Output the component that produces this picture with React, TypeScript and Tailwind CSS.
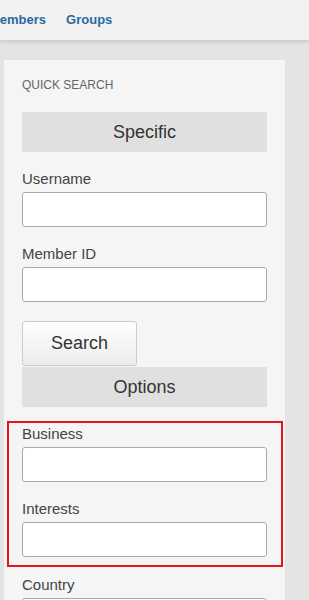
import React from "react";

const Field = ({ label }: { label: string }) => (
  <div className="mb-[17px]">
    <label className="block h-5 text-[15px] leading-5 text-[#444]">{label}</label>
    <input
      type="text"
      className="mt-[3px] block h-[35px] w-full rounded-[3px] border border-[#aaa] bg-white"
    />
  </div>
);

const SectionHead = ({ title }: { title: string }) => (
  <div className="flex h-10 items-center justify-center bg-[#e0e0e0] text-[18px] text-[#333]">
    {title}
  </div>
);

export default function App() {
  return (
    <div className="min-h-[600px] bg-[#e4e4e4] font-['Liberation_Sans',Arial,sans-serif]">
      <nav className="flex h-[41px] items-center gap-5 border-b border-[#cfcfcf] bg-[#f2f2f2] shadow-[0_2px_3px_rgba(0,0,0,0.08)]">
        <a className="-ml-[11px] text-[13px] font-bold text-[#2a6a9e]">Members</a>
        <a className="text-[13px] font-bold text-[#2a6a9e]">Groups</a>
      </nav>
      <div className="pl-1 pt-[19px]">
        <div className="w-[281px] bg-[#f5f5f5] px-[18px] pt-[18px] pb-4">
          <div className="mb-5 text-[12px] leading-[14px] text-[#666]">QUICK SEARCH</div>
          <SectionHead title="Specific" />
          <div className="pt-[17px]">
            <Field label="Username" />
            <Field label="Member ID" />
          </div>
          <button className="mt-[2px] h-[45px] w-[115px] rounded-[3px] border border-[#ccc] bg-gradient-to-b from-white to-[#ececec] text-[18px] text-[#333]">
            Search
          </button>
          <div className="mt-px">
            <SectionHead title="Options" />
          </div>
          <div className="-ml-[15px] -mr-[16px] mt-[14px] border-2 border-[#e8141b] pl-[13px] pr-[14px] pt-px pb-[8px]">
            <Field label="Business" />
            <div className="-mb-[17px]">
              <Field label="Interests" />
            </div>
          </div>
          <div className="pt-2">
            <Field label="Country" />
          </div>
        </div>
      </div>
    </div>
  );
}
